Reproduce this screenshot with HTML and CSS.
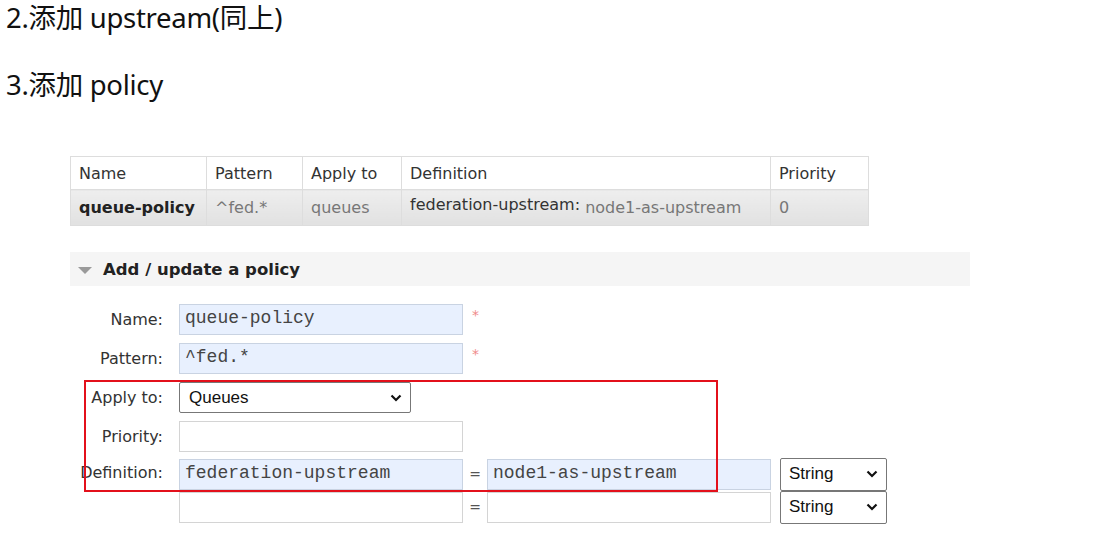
FILE: index.html
```html
<!DOCTYPE html>
<html>
<head>
<meta charset="utf-8">
<link rel="stylesheet" href="styles.css">
</head>
<body>
<div class="page">
  <p class="step">2.添加 upstream(同上)</p>
  <p class="step step2">3.添加 policy</p>

  <table class="policies">
    <thead>
      <tr>
        <th class="c-name">Name</th>
        <th class="c-pat">Pattern</th>
        <th class="c-apply">Apply to</th>
        <th class="c-def">Definition</th>
        <th class="c-pri">Priority</th>
      </tr>
    </thead>
    <tbody>
      <tr>
        <td class="c-name"><b>queue-policy</b></td>
        <td class="muted">^fed.*</td>
        <td class="muted">queues</td>
        <td class="c-def"><span class="defkey">federation-upstream:</span> <span class="muted">node1-as-upstream</span></td>
        <td class="muted">0</td>
      </tr>
    </tbody>
  </table>

  <div class="section">
    <div class="section-head"><span class="tri"></span>Add / update a policy</div>
    <div class="form">
      <div class="row">
        <label class="lbl">Name:</label>
        <div class="field filled">queue-policy</div>
        <span class="req">*</span>
      </div>
      <div class="row">
        <label class="lbl">Pattern:</label>
        <div class="field filled">^fed.*</div>
        <span class="req">*</span>
      </div>
      <div class="row">
        <label class="lbl">Apply to:</label>
        <div class="select wide"><span>Queues</span><svg class="chev" viewBox="0 0 12 8" width="12" height="8"><path d="M1.5 1.5 L6 6 L10.5 1.5" fill="none" stroke="#111" stroke-width="2.2"/></svg></div>
      </div>
      <div class="row">
        <label class="lbl">Priority:</label>
        <div class="field"></div>
      </div>
      <div class="row defrow">
        <label class="lbl">Definition:</label>
        <div class="defs">
          <div class="pair">
            <div class="field filled">federation-upstream</div>
            <span class="eq">=</span>
            <div class="field filled val">node1-as-upstream</div>
            <div class="select small"><span>String</span><svg class="chev" viewBox="0 0 12 8" width="12" height="8"><path d="M1.5 1.5 L6 6 L10.5 1.5" fill="none" stroke="#111" stroke-width="2.2"/></svg></div>
          </div>
          <div class="pair">
            <div class="field"></div>
            <span class="eq">=</span>
            <div class="field val"></div>
            <div class="select small"><span>String</span><svg class="chev" viewBox="0 0 12 8" width="12" height="8"><path d="M1.5 1.5 L6 6 L10.5 1.5" fill="none" stroke="#111" stroke-width="2.2"/></svg></div>
          </div>
        </div>
      </div>
      <div class="redbox"></div>
    </div>
  </div>
</div>
</body>
</html>
```

FILE: styles.css
```css
html, body {
  margin: 0;
  padding: 0;
  background: #fff;
}
.page {
  position: relative;
  width: 1112px;
  height: 538px;
  overflow: hidden;
  font-family: "DejaVu Sans", "Noto Sans CJK SC", sans-serif;
  color: #222;
}
.step {
  margin: 0;
  padding: 0 0 0 6px;
  font-family: "Noto Sans", "Noto Sans CJK SC", sans-serif;
  font-size: 27.5px;
  line-height: 36px;
  color: #111;
  letter-spacing: -0.3px;
}
.step2 {
  margin-top: 31px;
}

/* table */
.policies {
  margin: 53px 0 0 70px;
  border-collapse: collapse;
  font-size: 16px;
  color: #333;
}
.policies th, .policies td {
  border: 1px solid #ddd;
  text-align: left;
  padding: 0 8px;
  white-space: nowrap;
}
.policies th {
  font-weight: normal;
  height: 32px;
  background: #fff;
}
.policies td {
  height: 35px;
  background: linear-gradient(#eeeeee, #e1e1e1);
}
.c-name { width: 119px; }
.c-pat { width: 79px; }
.c-apply { width: 82px; }
.c-def { width: 352px; }
.c-pri { width: 81px; }
.policies b { color: #222; }
.muted { color: #777; }
.defkey { color: #333; position: relative; top: -3px; }

/* section */
.section {
  margin: 26px 0 0 70px;
}
.section-head {
  width: 900px;
  height: 34px;
  background: #f5f5f5;
  display: flex;
  align-items: center;
  font-weight: bold;
  font-size: 16.5px;
  color: #222;
  box-sizing: border-box;
  padding-left: 8px;
}
.tri {
  width: 0;
  height: 0;
  border-left: 7px solid transparent;
  border-right: 7px solid transparent;
  border-top: 7px solid #9a9a9a;
  margin-right: 11px;
  margin-top: 2px;
}

.form {
  position: relative;
  margin-top: 18px;
  margin-left: -70px;
  display: flex;
  flex-direction: column;
  gap: 8px;
}
.row {
  display: flex;
  align-items: center;
}
.lbl {
  text-align: right;
  font-size: 16px;
  color: #333;
  padding-right: 16px;
  box-sizing: border-box;
  width: 179px;
}
.field {
  width: 284px;
  height: 31px;
  box-sizing: border-box;
  border: 1px solid #d4d4d4;
  background: #fff;
  font-family: "Liberation Mono", monospace;
  font-size: 18px;
  color: #444;
  padding: 3px 0 0 5px;
  white-space: nowrap;
}
.field.filled {
  background: #e8f0fe;
  border-color: #c9d3e2;
}
.req {
  color: #f08a8a;
  font-size: 14px;
  margin-left: 9px;
  align-self: flex-start;
  margin-top: 3px;
}
.select {
  height: 31px;
  box-sizing: border-box;
  border: 1px solid #777;
  border-radius: 2px;
  background: #fff;
  display: flex;
  align-items: center;
  justify-content: space-between;
  padding: 0 8px 0 9px;
  font-family: "Liberation Sans", Arial, sans-serif;
  font-size: 17px;
  color: #111;
}
.select.wide {
  width: 232px;
}
.select.small {
  width: 107px;
  height: 33px;
  margin-left: 9px;
  padding-left: 8px;
}
.defrow {
  align-items: flex-start;
  margin-top: -2px;
}
.defrow .lbl {
  margin-top: 5px;
}
.defs {
  display: flex;
  flex-direction: column;
}
.pair {
  display: flex;
  align-items: center;
  height: 32px;
}
.pair + .pair {
  margin-top: 1px;
}
.pair .field {
  height: 31px;
}
.eq {
  width: 24px;
  text-align: center;
  font-size: 14px;
  color: #555;
}
.field.val {
  width: 284px;
}
.redbox {
  position: absolute;
  left: 84px;
  top: 76px;
  width: 634px;
  height: 112px;
  box-sizing: border-box;
  border: 2px solid #e3101b;
  pointer-events: none;
}
```
